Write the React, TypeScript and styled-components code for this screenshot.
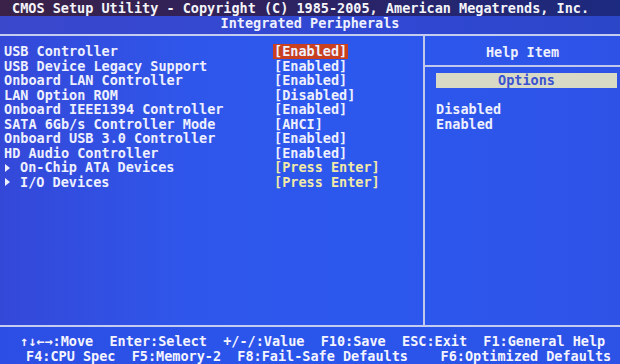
import React from "react";
import styled, { createGlobalStyle } from "styled-components";

const Global = createGlobalStyle`
  html, body {
    margin: 0;
    padding: 0;
    background: #2c52e6;
    overflow: hidden;
  }
`;

const Screen = styled.div`
  width: 620px;
  height: 364px;
  display: flex;
  flex-direction: column;
  font-family: "DejaVu Sans Mono", "Liberation Mono", monospace;
  font-weight: bold;
  font-size: 13.5px;
  color: #eef0ff;
  background: #2c52e6;
  overflow: hidden;
`;

const TitleBar = styled.div`
  height: 16px;
  line-height: 16px;
  padding-left: 12px;
  background: linear-gradient(90deg, #3a2248 0%, #2e2260 45%, #1c2a80 100%);
  color: #f4f4f8;
  white-space: pre;
`;

const SubTitle = styled.div`
  height: 18px;
  line-height: 14px;
  text-align: center;
  background: linear-gradient(90deg, #3a48cc 0%, #3048d4 60%, #2c46c8 100%);
  border-bottom: 2px solid #c4ccf0;
`;

const Body = styled.div`
  flex: 1;
  display: flex;
  background: linear-gradient(90deg, #3448d8 0%, #2f56ea 30%, #2c58ee 60%, #2e52e6 100%);
  border-bottom: 2px solid #c4ccf0;
`;

const Settings = styled.div`
  width: 425px;
  padding: 8px 0 0 4px;
  box-sizing: border-box;
  border-right: 2px solid #c0c8ee;
`;

const Row = styled.div`
  display: grid;
  grid-template-columns: 269px auto;
  height: 14.55px;
  line-height: 14.55px;
  white-space: pre;
`;

const Label = styled.span`
  display: flex;
  align-items: center;
`;

const Arrow = styled.span`
  width: 0;
  height: 0;
  margin: 0 10px 0 1px;
  border-top: 4px solid transparent;
  border-bottom: 4px solid transparent;
  border-left: 5px solid #eef0ff;
`;

const Value = styled.span<{ $selected?: boolean; $submenu?: boolean }>`
  justify-self: start;
  padding: 0 1px;
  color: ${(p) => (p.$submenu ? "#f2eaa6" : "#eef0ff")};
  background: ${(p) => (p.$selected ? "#c8401f" : "transparent")};
`;

const Help = styled.div`
  flex: 1;
  display: flex;
  flex-direction: column;
`;

const HelpTitle = styled.div`
  height: 29px;
  line-height: 33px;
  text-align: center;
  border-bottom: 2px solid #c0c8ee;
`;

const HelpContent = styled.div`
  padding: 6px 3px 0 11px;
  line-height: 14.55px;
`;

const OptionsBox = styled.div`
  height: 15px;
  line-height: 15px;
  text-align: center;
  background: #d8dac6;
  color: #3a52d2;
  margin-bottom: 14px;
`;

const Footer = styled.div`
  height: 37px;
  padding-top: 7px;
  box-sizing: border-box;
  background: linear-gradient(90deg, #2c4ee4 0%, #2a56ec 50%, #2c52e6 100%);
  color: #f4f4ff;
`;

const FooterLine = styled.div<{ $indent: number }>`
  height: 14.5px;
  line-height: 14.5px;
  padding-left: ${(p) => p.$indent}px;
  white-space: pre;
`;

type Item = { label: string; value: string; selected?: boolean; submenu?: boolean };

const items: Item[] = [
  { label: "USB Controller", value: "[Enabled]", selected: true },
  { label: "USB Device Legacy Support", value: "[Enabled]" },
  { label: "Onboard LAN Controller", value: "[Enabled]" },
  { label: "LAN Option ROM", value: "[Disabled]" },
  { label: "Onboard IEEE1394 Controller", value: "[Enabled]" },
  { label: "SATA 6Gb/s Controller Mode", value: "[AHCI]" },
  { label: "Onboard USB 3.0 Controller", value: "[Enabled]" },
  { label: "HD Audio Controller", value: "[Enabled]" },
  { label: "On-Chip ATA Devices", value: "[Press Enter]", submenu: true },
  { label: "I/O Devices", value: "[Press Enter]", submenu: true },
];

export default function App() {
  return (
    <Screen>
      <Global />
      <TitleBar>CMOS Setup Utility - Copyright (C) 1985-2005, American Megatrends, Inc.</TitleBar>
      <SubTitle>Integrated Peripherals</SubTitle>
      <Body>
        <Settings>
          {items.map((it) => (
            <Row key={it.label}>
              <Label>
                {it.submenu && <Arrow />}
                {it.label}
              </Label>
              <Value $selected={it.selected} $submenu={it.submenu}>
                {it.value}
              </Value>
            </Row>
          ))}
        </Settings>
        <Help>
          <HelpTitle>Help Item</HelpTitle>
          <HelpContent>
            <OptionsBox>Options</OptionsBox>
            <div>Disabled</div>
            <div>Enabled</div>
          </HelpContent>
        </Help>
      </Body>
      <Footer>
        <FooterLine $indent={20}>↑↓←→:Move  Enter:Select  +/-/:Value  F10:Save  ESC:Exit  F1:General Help</FooterLine>
        <FooterLine $indent={26}>F4:CPU Spec  F5:Memory-2  F8:Fail-Safe Defaults    F6:Optimized Defaults</FooterLine>
      </Footer>
    </Screen>
  );
}
